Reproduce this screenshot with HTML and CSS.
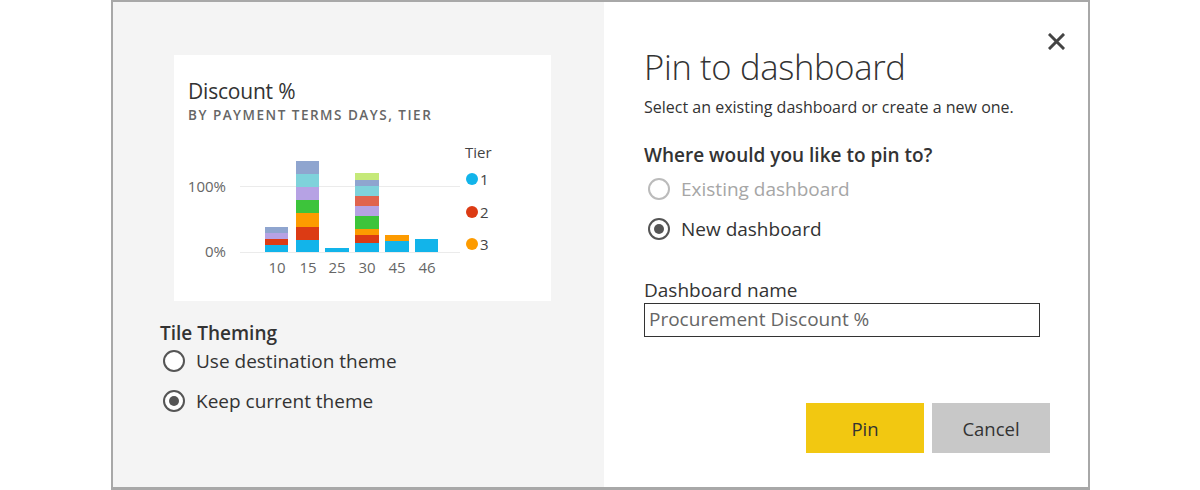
FILE: index.html
```html
<!DOCTYPE html>
<html>
<head>
<meta charset="utf-8">
<link rel="stylesheet" href="styles.css">
</head>
<body>
<div class="dialog">
  <div class="left">
    <div class="tile">
      <div class="tile-head">
        <div class="tile-title">Discount %</div>
        <div class="tile-sub">By Payment Terms Days, Tier</div>
      </div>
      <svg class="chart" width="377" height="171" viewBox="174 130 377 171">
        <line x1="240" y1="186.5" x2="460" y2="186.5" stroke="#ebebeb" stroke-width="1"/>
        <line x1="240" y1="252.5" x2="460" y2="252.5" stroke="#ebebeb" stroke-width="1"/>
        <text x="226" y="192" class="ax" text-anchor="end">100%</text>
        <text x="226" y="257" class="ax" text-anchor="end">0%</text>
        <!-- bar 10 -->
        <rect x="265" y="245" width="23" height="7" fill="#12b4ea"/>
        <rect x="265" y="239" width="23" height="6" fill="#dc3b14"/>
        <rect x="265" y="233" width="23" height="6" fill="#b6a2e4"/>
        <rect x="265" y="227" width="23" height="6" fill="#8fa5cf"/>
        <!-- bar 15 -->
        <rect x="296" y="240" width="23" height="12" fill="#12b4ea"/>
        <rect x="296" y="227" width="23" height="13" fill="#dc3b14"/>
        <rect x="296" y="213" width="23" height="14" fill="#fd9b00"/>
        <rect x="296" y="200" width="23" height="13" fill="#3dc43b"/>
        <rect x="296" y="187" width="23" height="13" fill="#b6a2e4"/>
        <rect x="296" y="174" width="23" height="13" fill="#7fd2db"/>
        <rect x="296" y="161" width="23" height="13" fill="#8fa5cf"/>
        <!-- bar 25 -->
        <rect x="325" y="248" width="24" height="4" fill="#12b4ea"/>
        <!-- bar 30 -->
        <rect x="355" y="243" width="24" height="9" fill="#12b4ea"/>
        <rect x="355" y="235" width="24" height="8" fill="#dc3b14"/>
        <rect x="355" y="229" width="24" height="6" fill="#fd9b00"/>
        <rect x="355" y="216" width="24" height="13" fill="#3dc43b"/>
        <rect x="355" y="206" width="24" height="10" fill="#b6a2e4"/>
        <rect x="355" y="196" width="24" height="10" fill="#e0644e"/>
        <rect x="355" y="186" width="24" height="10" fill="#7fd2db"/>
        <rect x="355" y="180" width="24" height="6" fill="#8fa5cf"/>
        <rect x="355" y="173" width="24" height="7" fill="#c5e979"/>
        <!-- bar 45 -->
        <rect x="385" y="241" width="24" height="11" fill="#12b4ea"/>
        <rect x="385" y="235" width="24" height="6" fill="#fd9b00"/>
        <!-- bar 46 -->
        <rect x="415" y="239" width="23" height="13" fill="#12b4ea"/>
        <text x="277" y="273" class="ax" text-anchor="middle">10</text>
        <text x="308" y="273" class="ax" text-anchor="middle">15</text>
        <text x="337" y="273" class="ax" text-anchor="middle">25</text>
        <text x="367" y="273" class="ax" text-anchor="middle">30</text>
        <text x="397" y="273" class="ax" text-anchor="middle">45</text>
        <text x="427" y="273" class="ax" text-anchor="middle">46</text>
        <text x="465" y="158" class="lg">Tier</text>
        <circle cx="472" cy="179" r="6" fill="#12b4ea"/>
        <text x="480" y="185" class="lg">1</text>
        <circle cx="472" cy="212" r="6" fill="#dc3b14"/>
        <text x="480" y="218" class="lg">2</text>
        <circle cx="472" cy="244" r="6" fill="#fd9b00"/>
        <text x="480" y="250" class="lg">3</text>
      </svg>
    </div>
    <div class="theming">
      <div class="theming-title">Tile Theming</div>
      <div class="radio-row">
        <span class="radio"></span>
        <span class="radio-label">Use destination theme</span>
      </div>
      <div class="radio-row">
        <span class="radio checked"></span>
        <span class="radio-label">Keep current theme</span>
      </div>
    </div>
  </div>
  <div class="right">
    <button class="close" aria-label="Close">
      <svg width="17" height="17" viewBox="0 0 17 17"><path d="M2 2 L15 15 M15 2 L2 15" stroke="#444" stroke-width="3" stroke-linecap="square"/></svg>
    </button>
    <h1 class="title">Pin to dashboard</h1>
    <p class="subtitle">Select an existing dashboard or create a new one.</p>
    <div class="question">Where would you like to pin to?</div>
    <div class="radio-row r-right disabled">
      <span class="radio"></span>
      <span class="radio-label">Existing dashboard</span>
    </div>
    <div class="radio-row r-right">
      <span class="radio checked"></span>
      <span class="radio-label">New dashboard</span>
    </div>
    <label class="field-label">Dashboard name</label>
    <div class="input">Procurement Discount %</div>
    <div class="buttons">
      <button class="btn pin">Pin</button>
      <button class="btn cancel">Cancel</button>
    </div>
  </div>
</div>
</body>
</html>
```

FILE: styles.css
```css
html, body {
  margin: 0;
  padding: 0;
  background: #ffffff;
}
body {
  font-family: "Open Sans", "Noto Sans", sans-serif;
  color: #333;
}
.dialog {
  display: flex;
  margin-left: 111px;
  width: 979px;
  height: 490px;
  box-sizing: border-box;
  border: 2px solid #a8a8a8;
  border-bottom-width: 3px;
}
.left {
  width: 491px;
  background: #f4f4f4;
  box-sizing: border-box;
  padding: 53px 0 0 47px;
}
.tile {
  margin-left: 14px;
  width: 377px;
  height: 246px;
  background: #fff;
}
.tile-head {
  height: 75px;
  box-sizing: border-box;
  padding: 24px 0 0 14px;
}
.tile-title {
  font-size: 21px;
  line-height: 24px;
  color: #333;
  letter-spacing: -0.2px;
}
.tile-sub {
  margin-top: 3px;
  font-size: 13.5px;
  line-height: 18px;
  color: #666;
  text-transform: uppercase;
  letter-spacing: 1.5px;
  font-weight: 600;
}
.chart {
  display: block;
}
.ax {
  font-family: "Open Sans", sans-serif;
  font-size: 15px;
  fill: #666;
}
.lg {
  font-family: "Open Sans", sans-serif;
  font-size: 15px;
  fill: #444;
}
.theming {
  margin-top: 22px;
}
.theming-title {
  font-size: 19px;
  line-height: 20px;
  font-weight: 600;
  color: #333;
  margin-bottom: -2px;
}
.radio-row {
  display: flex;
  align-items: center;
  height: 40px;
  gap: 11px;
  margin-left: 3px;
}
.radio {
  width: 18px;
  height: 18px;
  border: 2px solid #555;
  border-radius: 50%;
  background: #fff;
  display: flex;
  align-items: center;
  justify-content: center;
  flex: none;
}
.radio.checked::after {
  content: "";
  width: 10px;
  height: 10px;
  border-radius: 50%;
  background: #555;
}
.radio-label {
  font-size: 19px;
  color: #333;
}
.right {
  position: relative;
  flex: 1;
  background: #fff;
  padding: 0 0 0 40px;
}
.close {
  position: absolute;
  top: 31px;
  right: 23px;
  border: 0;
  background: transparent;
  padding: 0;
  width: 17px;
  height: 17px;
}
.close svg { display: block; }
.title {
  margin: 42px 0 0;
  font-size: 34.5px;
  line-height: 46px;
  font-weight: 300;
  color: #333;
  letter-spacing: -0.3px;
}
.subtitle {
  margin: 7px 0 0;
  font-size: 16px;
  line-height: 20px;
  color: #333;
}
.question {
  margin-top: 26px;
  font-size: 19px;
  line-height: 24px;
  font-weight: 600;
  color: #333;
}
.r-right {
  margin-left: 4px;
  margin-top: 2px;
}
.r-right + .r-right {
  margin-top: 0;
}
.disabled .radio {
  border-color: #bbb;
}
.disabled .radio-label {
  color: #a6a6a6;
}
.field-label {
  display: block;
  margin-top: 29px;
  font-size: 19px;
  line-height: 24px;
  color: #333;
}
.input {
  margin-top: 1px;
  width: 396px;
  height: 34px;
  box-sizing: border-box;
  border: 1.5px solid #333;
  padding: 0 0 0 4px;
  font-size: 19px;
  line-height: 31px;
  color: #666;
}
.buttons {
  display: flex;
  gap: 8px;
  margin: 66px 0 0 162px;
}
.btn {
  width: 118px;
  height: 50px;
  border: 0;
  font-family: "Open Sans", sans-serif;
  font-size: 18.5px;
  color: #333;
  padding: 0;
}
.pin {
  background: #f2c811;
}
.cancel {
  background: #c8c8c8;
}
```
